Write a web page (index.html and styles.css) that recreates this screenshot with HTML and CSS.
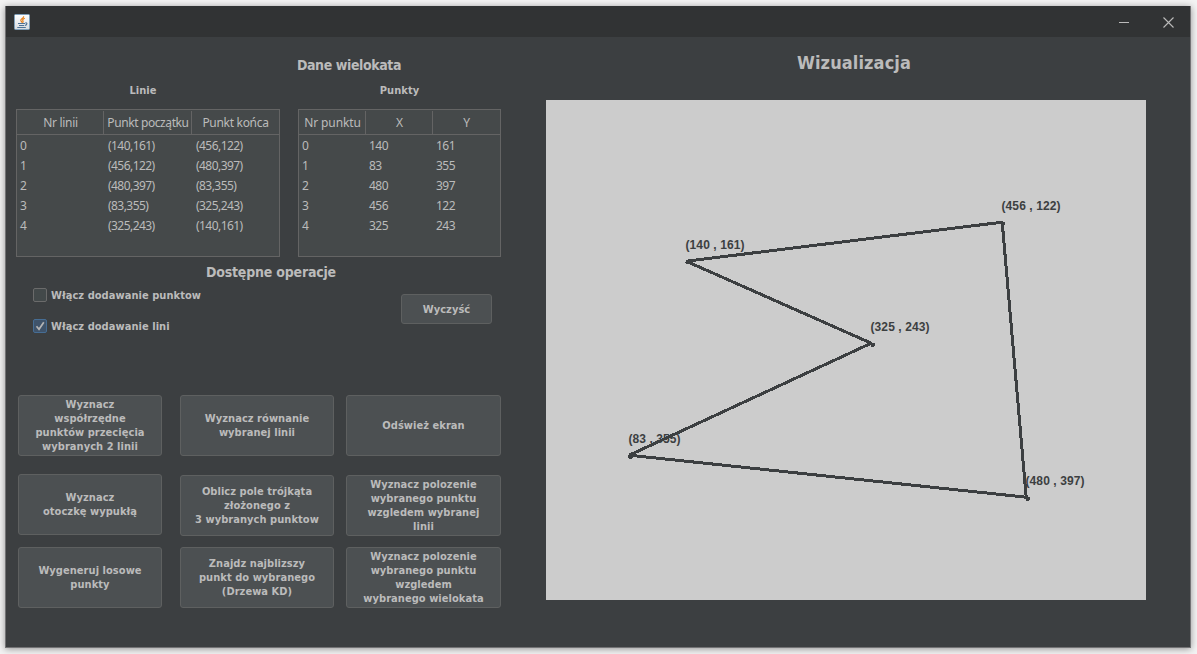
FILE: index.html
```html
<!DOCTYPE html>
<html lang="pl">
<head>
<meta charset="utf-8">
<title>Wielokat</title>
<link rel="stylesheet" href="styles.css">
</head>
<body>
<div class="window">
  <header class="titlebar">
    <svg class="java-icon" width="16" height="16" viewBox="0 0 16 16">
      <defs><linearGradient id="g" x1="0" y1="0" x2="0" y2="1"><stop offset="0" stop-color="#fff"/><stop offset="1" stop-color="#d8dce0"/></linearGradient></defs>
      <rect x=".5" y=".5" width="15" height="15" rx="1" fill="url(#g)" stroke="#7fa0bb"/>
      <path d="M9.600 2.200C10.200 4 6.300 5 6.800 6.600c.3.800 1 1.100 1.200 2M10.800 4.200C8.700 5.200 8.300 6 9 7c.4.700.1 1.200-.5 1.700" fill="none" stroke="#e8811a" stroke-width="1.200"/>
      <path d="M4 9.500h7M5 11.500h5.200M3.300 13.500h8.500M11.300 9c2.200-.8 2.200 1.700-.3 2.500" fill="none" stroke="#4f7396" stroke-width="1.100"/>
    </svg>
    <div class="controls">
      <svg width="11" height="11" viewBox="0 0 11 11"><path d="M0 5.500h10" stroke="#bbb" stroke-width="1"/></svg>
      <svg width="11" height="11" viewBox="0 0 11 11"><path d="M.5.500l10 10M10.500.500l-10 10" stroke="#bbb" stroke-width="1.100"/></svg>
    </div>
  </header>
  <main class="content">
    <section class="left">
      <h2 class="heading data-heading">Dane wielokata</h2>
      <div class="tables">
        <div class="table-block">
          <h3 class="caption">Linie</h3>
          <div class="table lines">
            <div class="row head"><span>Nr linii</span><span class="tight">Punkt początku</span><span>Punkt końca</span></div>
            <div class="row"><span>0</span><span>(140,161)</span><span>(456,122)</span></div>
            <div class="row"><span>1</span><span>(456,122)</span><span>(480,397)</span></div>
            <div class="row"><span>2</span><span>(480,397)</span><span>(83,355)</span></div>
            <div class="row"><span>3</span><span>(83,355)</span><span>(325,243)</span></div>
            <div class="row"><span>4</span><span>(325,243)</span><span>(140,161)</span></div>
          </div>
        </div>
        <div class="table-block">
          <h3 class="caption">Punkty</h3>
          <div class="table points">
            <div class="row head"><span>Nr punktu</span><span>X</span><span>Y</span></div>
            <div class="row"><span>0</span><span>140</span><span>161</span></div>
            <div class="row"><span>1</span><span>83</span><span>355</span></div>
            <div class="row"><span>2</span><span>480</span><span>397</span></div>
            <div class="row"><span>3</span><span>456</span><span>122</span></div>
            <div class="row"><span>4</span><span>325</span><span>243</span></div>
          </div>
        </div>
      </div>
      <h2 class="heading ops-heading">Dostępne operacje</h2>
      <div class="options">
        <div class="checks">
          <label class="check"><span class="box"></span><span class="check-text">Włącz dodawanie punktow</span></label>
          <label class="check"><span class="box on"><svg width="12" height="12" viewBox="0 0 12 12"><path d="M2.500 6.300l2.500 3L9.800 2.300" fill="none" stroke="#b4b4b4" stroke-width="1.700"/></svg></span><span class="check-text">Włącz dodawanie lini</span></label>
        </div>
        <button class="btn clear">Wyczyść</button>
      </div>
      <div class="ops">
        <div class="ops-col">
          <button class="btn">Wyznacz<br>współrzędne<br>punktów przecięcia<br>wybranych 2 linii</button>
          <button class="btn">Wyznacz<br>otoczkę wypukłą</button>
          <button class="btn">Wygeneruj losowe<br>punkty</button>
        </div>
        <div class="ops-col">
          <button class="btn">Wyznacz równanie<br>wybranej linii</button>
          <button class="btn">Oblicz pole trójkąta<br>złożonego z<br>3 wybranych punktow</button>
          <button class="btn">Znajdz najblizszy<br>punkt do wybranego<br>(Drzewa KD)</button>
        </div>
        <div class="ops-col">
          <button class="btn">Odśwież ekran</button>
          <button class="btn">Wyznacz polozenie<br>wybranego punktu<br>wzgledem wybranej<br>linii</button>
          <button class="btn">Wyznacz polozenie<br>wybranego punktu<br>wzgledem<br>wybranego wielokata</button>
        </div>
      </div>
    </section>
    <section class="right">
      <h1 class="title">Wizualizacja</h1>
      <svg class="canvas" width="600" height="500" viewBox="0 0 600 500">
        <g shape-rendering="crispEdges">
          <path d="M140.200 161.200L456.200 122.200L480.200 397.200L83.200 355.200L325.200 243.200Z" fill="none" stroke="#3c3f41" stroke-width="3" stroke-linejoin="bevel"/>
          <g fill="#3c3f41">
            <circle cx="141.500" cy="162.500" r="2"/><circle cx="457.500" cy="123.500" r="2"/><circle cx="482" cy="399" r="2"/><circle cx="84.500" cy="356.500" r="2.500"/><circle cx="327" cy="245" r="2"/>
          </g>
        </g>
        <g class="labels">
          <text x="139.500" y="149" textLength="59">(140 , 161)</text>
          <text x="455.500" y="110" textLength="59">(456 , 122)</text>
          <text x="479.500" y="385" textLength="59">(480 , 397)</text>
          <text x="82.500" y="343" textLength="52">(83 , 355)</text>
          <text x="324.500" y="231" textLength="59">(325 , 243)</text>
        </g>
      </svg>
    </section>
  </main>
</div>
</body>
</html>
```
FILE: styles.css
```css
* { box-sizing: border-box; }
body {
  margin: 0;
  padding: 6px 6px 6px 5px;
  height: 654px;
  overflow: hidden;
  background: #f3f3f3;
}
.window {
  height: 642px;
  background: #3c3f41;
  border: 1px solid #737375;
  border-top: 0;
  box-shadow: 0 1px 7px rgba(0, 0, 0, .4);
  color: #bbb;
  font: bold 11px/14px "DejaVu Sans Condensed", "DejaVu Sans", sans-serif;
  letter-spacing: .05px;
}
.titlebar {
  height: 31px;
  padding: 1px 16px 0 8px;
  background: #313334;
  display: flex;
  align-items: center;
  justify-content: space-between;
}
.controls { display: flex; gap: 33px; }
.controls svg, .java-icon { display: block; }
.java-icon { margin-top: -1px; }
.content { display: flex; }
.left { width: 540px; padding: 19px 0 0 10px; }
h1, h2, h3 { margin: 0; text-align: center; }
.heading { font-size: 14px; line-height: 18px; letter-spacing: -.4px; }
.data-heading { margin-left: 181px; width: 304px; }
.tables { display: flex; gap: 18px; margin-top: 10px; }
.caption { font-size: 11px; line-height: 14px; margin-bottom: 11px; }
.table-block:first-child .caption { padding-right: 10px; }
.table {
  height: 148px;
  background: #45494a;
  border: 1px solid #646464;
  font: 12px/20px "Noto Sans", sans-serif;
}
.lines { width: 264px; }
.points { width: 203px; }
.row { display: grid; height: 20px; letter-spacing: -.55px; }
.lines .row { grid-template-columns: 87px 88px 87px; }
.points .row { grid-template-columns: 67px 67px 67px; }
.row span { padding-left: 3px; white-space: nowrap; }
.lines .row:not(.head) span + span { padding-left: 4px; }
.head {
  height: 25px;
  line-height: 25px;
  border-bottom: 1px solid #646464;
  margin-bottom: 1px;
  letter-spacing: -.1px;
  text-align: center;
}
.head span { padding: 0 0 0 1px; margin: 1px 0; line-height: 23px; border-right: 1px solid #646464; }
.lines .head { letter-spacing: -.3px; }
.head .tight { letter-spacing: -.4px; }
.head span:last-child { border-right-color: transparent; }
.ops-heading { width: 510px; margin-top: 6px; letter-spacing: -.2px; }
.options { display: flex; justify-content: space-between; height: 114px; padding: 7px 9px 0 17px; width: 485px; }
.checks { display: flex; flex-direction: column; gap: 17px; }
.check { display: flex; align-items: center; height: 14px; gap: 4px; }
.check-text { padding-top: 2px; }
.box { width: 14px; height: 14px; border: 1px solid #6b6b6b; border-radius: 2px; background: #43494a; }
.box.on { border-color: #466d94; background: #3f536a; }
.box svg { display: block; }
.btn {
  margin: 0;
  padding: 0;
  color: #bbb;
  font: inherit;
  letter-spacing: inherit;
  background: #4c5052;
  border: 1px solid #5e6060;
  border-radius: 3px;
  white-space: nowrap;
  display: flex;
  align-items: center;
  justify-content: center;
  text-align: center;
}
.clear { width: 91px; height: 30px; margin-top: 6px; padding-top: 2px; }
.ops { display: flex; padding-left: 2px; }
.ops-col { display: flex; flex-direction: column; }
.ops-col .btn { width: 100%; height: 61px; }
.ops-col:nth-child(1) { width: 144px; margin-right: 18px; }
.ops-col:nth-child(2) { width: 154px; margin-right: 12px; }
.ops-col:nth-child(3) { width: 155px; }
.ops-col .btn:nth-child(2) { margin: 19px 0 11px; }
.ops-col:first-child .btn:nth-child(2) { margin: 18px 0 12px; }
.right { width: 600px; padding-top: 14px; }
.title { font: bold 18px/24px "DejaVu Sans Condensed", "DejaVu Sans", sans-serif; letter-spacing: .1px; width: 616px; margin-bottom: 25px; }
.canvas { display: block; background: #ccc; letter-spacing: 0; }
.labels { font: bold 12px "Liberation Sans", Arial, sans-serif; fill: #3c3f41; }
```
